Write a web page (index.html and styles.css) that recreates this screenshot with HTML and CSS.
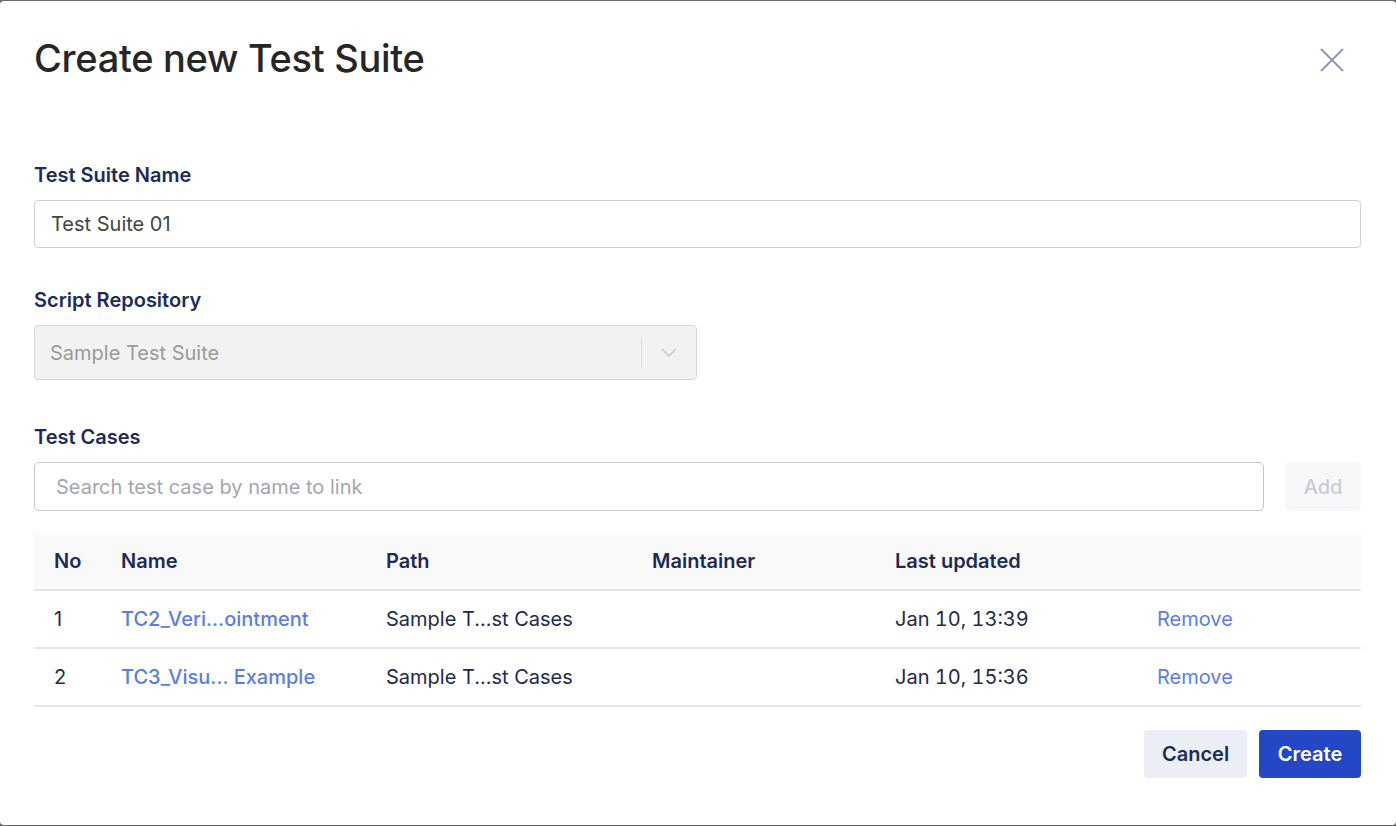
FILE: index.html
```html
<!DOCTYPE html>
<html lang="en">
<head>
<meta charset="utf-8">
<title>Create new Test Suite</title>
<link rel="stylesheet" href="styles.css">
</head>
<body>
<div class="modal">
  <div class="modal-header">
    <h1 class="title">Create new Test Suite</h1>
    <button class="close" aria-label="Close">
      <svg width="26" height="26" viewBox="0 0 26 26"><path d="M2.5 2.5 L23.5 23.5 M23.5 2.5 L2.5 23.5" stroke="#8e96b8" stroke-width="2" stroke-linecap="round" fill="none"/></svg>
    </button>
  </div>

  <div class="field field-name">
    <label class="label">Test Suite Name</label>
    <div class="input">Test Suite 01</div>
  </div>

  <div class="field field-repo">
    <label class="label">Script Repository</label>
    <div class="select">
      <span class="select-value">Sample Test Suite</span>
      <span class="select-sep"></span>
      <span class="select-arrow">
        <svg width="16" height="10" viewBox="0 0 16 10"><path d="M1.5 1.5 L8 8 L14.5 1.5" stroke="#c8c8c8" stroke-width="1.6" fill="none" stroke-linecap="round" stroke-linejoin="round"/></svg>
      </span>
    </div>
  </div>

  <div class="field field-cases">
    <label class="label">Test Cases</label>
    <div class="search-row">
      <div class="search">Search test case by name to link</div>
      <button class="btn-add">Add</button>
    </div>
  </div>

  <div class="table">
    <div class="tr th">
      <div class="td">No</div>
      <div class="td">Name</div>
      <div class="td">Path</div>
      <div class="td">Maintainer</div>
      <div class="td">Last updated</div>
      <div class="td"></div>
    </div>
    <div class="tr">
      <div class="td">1</div>
      <div class="td link">TC2_Veri...ointment</div>
      <div class="td">Sample T...st Cases</div>
      <div class="td"></div>
      <div class="td date">Jan 10, 13:39</div>
      <div class="td action">Remove</div>
    </div>
    <div class="tr">
      <div class="td">2</div>
      <div class="td link">TC3_Visu... Example</div>
      <div class="td">Sample T...st Cases</div>
      <div class="td"></div>
      <div class="td date">Jan 10, 15:36</div>
      <div class="td action">Remove</div>
    </div>
  </div>

  <div class="footer">
    <button class="btn btn-cancel">Cancel</button>
    <button class="btn btn-create">Create</button>
  </div>
</div>
</body>
</html>
```

FILE: styles.css
```css
* { box-sizing: border-box; }
html, body { margin: 0; padding: 0; }
body {
  background: #6a6a6a;
  font-family: Inter, "Noto Sans", "Liberation Sans", sans-serif;
  padding-top: 1px;
}
.modal {
  background: #fff;
  height: 824px;
  border-radius: 4px;
  padding: 29px 35px 0 34px;
  display: flex;
  flex-direction: column;
}
.modal-header {
  display: flex;
  justify-content: space-between;
  align-items: flex-start;
}
.title {
  margin: 0;
  font-size: 38px;
  line-height: 56px;
  font-weight: 500;
  color: #262626;
  letter-spacing: -0.3px;
}
.close {
  border: 0;
  background: none;
  padding: 0;
  margin: 17px 16px 0 0;
  width: 26px;
  height: 26px;
  cursor: pointer;
}
.field { display: flex; flex-direction: column; }
.field-name { margin-top: 77px; }
.field-repo { margin-top: 40px; }
.field-cases { margin-top: 45px; }
.label {
  font-size: 20px;
  line-height: 24px;
  font-weight: 600;
  color: #1e2b58;
  margin-bottom: 13px;
}
.input {
  height: 48px;
  border: 1px solid #cfd2d8;
  border-radius: 4px;
  padding: 0 16px;
  display: flex;
  align-items: center;
  font-size: 20px;
  color: #444;
}
.select {
  width: 663px;
  height: 55px;
  background: #f2f2f2;
  border: 1px solid #d6d6d6;
  border-radius: 4px;
  display: flex;
  align-items: center;
  padding-left: 15px;
}
.select-value {
  flex: 1;
  font-size: 20px;
  color: #9a9a9a;
}
.select-sep {
  width: 1px;
  height: 30px;
  background: #dcdcdc;
}
.select-arrow {
  width: 54px;
  display: flex;
  justify-content: center;
  align-items: center;
}
.search-row {
  display: flex;
  gap: 21px;
}
.search {
  flex: 1;
  height: 49px;
  border: 1px solid #c6c6c6;
  border-radius: 5px;
  padding: 0 21px;
  display: flex;
  align-items: center;
  font-size: 20px;
  color: #a2a6b0;
}
.btn-add {
  width: 76px;
  height: 49px;
  border: 0;
  border-radius: 5px;
  background: #f7f8fa;
  color: #c9ccd8;
  font-family: inherit;
  font-size: 20px;
  font-weight: 500;
}
.table { margin-top: 22px; }
.tr {
  display: grid;
  grid-template-columns: 67px 265px 266px 243px 262px 1fr;
  height: 58px;
  align-items: center;
  border-bottom: 2px solid #e6e6e6;
  font-size: 20px;
  color: #1f2a4e;
}
.th {
  background: #f9f9f9;
  font-weight: 600;
  color: #1e2b58;
}
.td { padding-left: 20px; white-space: nowrap; }
.date { font-feature-settings: "tnum"; }
.link { color: #5a7ee6; font-weight: 500; }
.action { color: #5a7ee6; }
.footer {
  margin-top: 23px;
  display: flex;
  justify-content: flex-end;
  gap: 12px;
}
.btn {
  height: 48px;
  border: 0;
  border-radius: 4px;
  font-family: inherit;
  font-size: 20px;
  font-weight: 600;
  padding: 0 18px;
  cursor: pointer;
}
.btn-cancel { background: #ebeef5; color: #1e2b58; width: 103px; }
.btn-create { background: #2347c5; color: #fff; width: 102px; }
```
